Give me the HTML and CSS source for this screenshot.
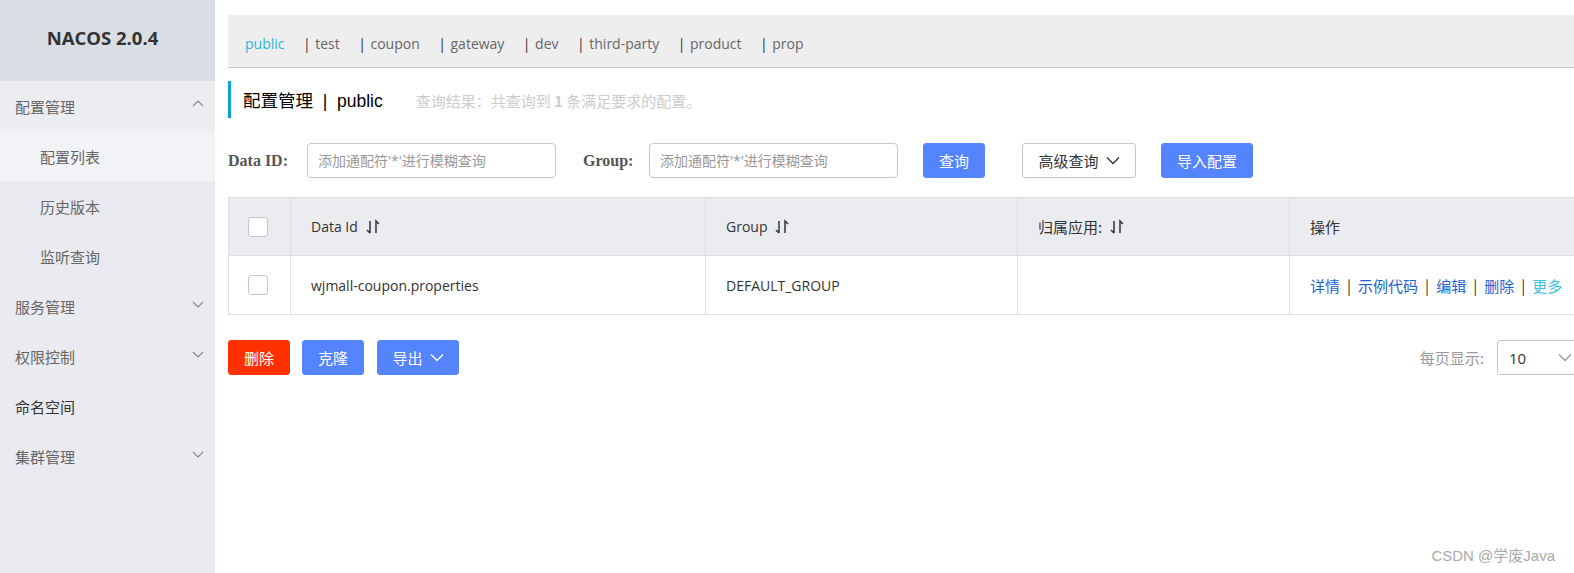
FILE: index.html
```html
<!DOCTYPE html>
<html lang="zh">
<head>
<meta charset="utf-8">
<link rel="stylesheet" href="styles.css">
</head>
<body>
<div class="app">
  <aside class="sidebar">
    <div class="logo">NACOS 2.0.4</div>
    <nav class="menu">
      <div class="menu-item group-open">配置管理
        <svg class="arrow" width="12" height="8" viewBox="0 0 12 8"><path d="M1 7 L6 2 L11 7" fill="none" stroke="#888" stroke-width="1.2"/></svg>
      </div>
      <div class="menu-sub active">配置列表</div>
      <div class="menu-sub">历史版本</div>
      <div class="menu-sub">监听查询</div>
      <div class="menu-item">服务管理
        <svg class="arrow" width="12" height="8" viewBox="0 0 12 8"><path d="M1 1 L6 6 L11 1" fill="none" stroke="#888" stroke-width="1.2"/></svg>
      </div>
      <div class="menu-item">权限控制
        <svg class="arrow" width="12" height="8" viewBox="0 0 12 8"><path d="M1 1 L6 6 L11 1" fill="none" stroke="#888" stroke-width="1.2"/></svg>
      </div>
      <div class="menu-item dark">命名空间</div>
      <div class="menu-item">集群管理
        <svg class="arrow" width="12" height="8" viewBox="0 0 12 8"><path d="M1 1 L6 6 L11 1" fill="none" stroke="#888" stroke-width="1.2"/></svg>
      </div>
    </nav>
  </aside>
  <main class="main">
    <div class="ns-bar">
      <span class="ns active">public</span>
      <span class="ns"><i>|</i> test</span>
      <span class="ns"><i>|</i> coupon</span>
      <span class="ns"><i>|</i> gateway</span>
      <span class="ns"><i>|</i> dev</span>
      <span class="ns"><i>|</i> third-party</span>
      <span class="ns"><i>|</i> product</span>
      <span class="ns"><i>|</i> prop</span>
    </div>
    <div class="title-row">
      <span class="title">配置管理 &nbsp;|&nbsp; public</span>
      <span class="result">查询结果：共查询到 <b>1</b> 条满足要求的配置。</span>
    </div>
    <div class="search-row">
      <label class="lbl">Data ID:</label>
      <input class="inp" type="text" placeholder="添加通配符'*'进行模糊查询">
      <label class="lbl lbl2">Group:</label>
      <input class="inp" type="text" placeholder="添加通配符'*'进行模糊查询">
      <button class="btn primary btn-query">查询</button>
      <button class="btn normal btn-adv">高级查询
        <svg width="14" height="9" viewBox="0 0 14 9"><path d="M1 1.5 L7 7.5 L13 1.5" fill="none" stroke="#333" stroke-width="1.4"/></svg>
      </button>
      <button class="btn primary btn-import">导入配置</button>
    </div>
    <div class="table">
      <div class="tr th">
        <div class="td c0"><span class="cb"></span></div>
        <div class="td c1">Data Id <svg class="sort" width="14" height="16" viewBox="0 0 14 16"><path d="M4 2 V14 M1 11 L4 14 M10 14 V2 L13 5" fill="none" stroke="#333" stroke-width="1.5"/></svg></div>
        <div class="td c2">Group <svg class="sort" width="14" height="16" viewBox="0 0 14 16"><path d="M4 2 V14 M1 11 L4 14 M10 14 V2 L13 5" fill="none" stroke="#333" stroke-width="1.5"/></svg></div>
        <div class="td c3 cjk">归属应用: <svg class="sort" width="14" height="16" viewBox="0 0 14 16"><path d="M4 2 V14 M1 11 L4 14 M10 14 V2 L13 5" fill="none" stroke="#333" stroke-width="1.5"/></svg></div>
        <div class="td c4 cjk">操作</div>
      </div>
      <div class="tr tb">
        <div class="td c0"><span class="cb"></span></div>
        <div class="td c1">wjmall-coupon.properties</div>
        <div class="td c2">DEFAULT_GROUP</div>
        <div class="td c3"></div>
        <div class="td c4 ops"><a>详情</a><i>|</i><a>示例代码</a><i>|</i><a>编辑</a><i>|</i><a>删除</a><i>|</i><a class="more">更多</a></div>
      </div>
    </div>
    <div class="bottom-row">
      <div class="left-btns">
        <button class="btn danger b-del">删除</button>
        <button class="btn primary b-clone">克隆</button>
        <button class="btn primary b-export">导出
          <svg width="14" height="9" viewBox="0 0 14 9"><path d="M1 1.5 L7 7.5 L13 1.5" fill="none" stroke="#fff" stroke-width="1.4"/></svg>
        </button>
      </div>
      <div class="pager">
        <span class="pager-lbl">每页显示:</span>
        <div class="select">10
          <svg width="14" height="9" viewBox="0 0 14 9"><path d="M1 1.5 L7 7.5 L13 1.5" fill="none" stroke="#999" stroke-width="1.3"/></svg>
        </div>
      </div>
    </div>
  </main>
</div>
<div class="watermark">CSDN @学废Java</div>
</body>
</html>
```
FILE: styles.css
```css
* { box-sizing: border-box; }
html, body { margin: 0; padding: 0; }
body {
  width: 1574px;
  height: 573px;
  overflow: hidden;
  font-family: "Open Sans", "Noto Sans CJK SC", sans-serif;
  font-size: 14px;
  color: #333;
  background: #fff;
  position: relative;
}
.app { display: flex; height: 573px; }
.sidebar {
  width: 215px;
  flex: 0 0 215px;
  background: #e9ebf0;
  height: 100%;
}
.logo {
  height: 81px;
  background: #d9dde4;
  display: flex;
  align-items: center;
  justify-content: center;
  font-family: "Open Sans", "Noto Sans CJK SC", sans-serif;
  font-weight: 700;
  font-size: 18.5px;
  color: #333;
  padding-bottom: 6px;
  padding-right: 10px;
}
.menu-item, .menu-sub {
  height: 50px;
  display: flex;
  align-items: center;
  padding-left: 15px;
  padding-right: 12px;
  color: #666;
  font-family: "Noto Sans CJK SC", sans-serif;
  font-size: 15px;
  position: relative;
}
.menu-item.group-open { background: #ecedf1; }
.menu-item.dark { color: #333; }
.menu-sub { padding-left: 40px; }
.menu-sub.active { background: #f2f3f7; }
.arrow { position: absolute; right: 11px; top: 20px; }
.menu-item.group-open .arrow { top: 18px; }

.main {
  flex: 1;
  min-width: 0;
  padding-left: 13px;
  padding-top: 15px;
  overflow: hidden;
}
.ns-bar {
  height: 53px;
  background: #eee;
  border-bottom: 1px solid #ccc;
  display: flex;
  align-items: center;
  padding-left: 17px;
  padding-top: 4px;
  width: 1400px;
}
.ns {
  color: #666;
  margin-right: 18.4px;
  font-size: 14px;
  white-space: nowrap;
}
.ns i { font-style: normal; color: #333; margin-right: 1px; }
.ns.active { color: #2cb5d8; }

.title-row {
  margin-top: 13px;
  height: 37px;
  border-left: 3px solid #0aa1d3;
  display: flex;
  align-items: center;
  padding-left: 12px;
}
.title { font-size: 17.5px; color: #000; font-family: "Liberation Sans", "Noto Sans CJK SC", sans-serif; }
.result { margin-left: 33px; color: #ccc; font-size: 15px; padding-top: 2px; font-family: "Noto Sans CJK SC", sans-serif; }
.result b { font-weight: 700; }

.search-row {
  margin-top: 25px;
  height: 35px;
  display: flex;
  align-items: center;
}
.lbl {
  font-family: "Liberation Serif", serif;
  font-weight: 700;
  font-size: 16px;
  color: #555;
  width: 79px;
}
.lbl2 { width: 66px; margin-left: 27px; }
.inp {
  width: 249px;
  height: 35px;
  border: 1px solid #c4c6cf;
  border-radius: 4px;
  padding: 0 10px;
  font-family: "Open Sans", "Noto Sans CJK SC", sans-serif;
  font-size: 14px;
  color: #333;
  outline: none;
}
.inp::placeholder { color: #999; }
.btn {
  height: 35px;
  border-radius: 3px;
  font-family: "Noto Sans CJK SC", sans-serif;
  font-size: 15px;
  border: 1px solid transparent;
  display: inline-flex;
  align-items: center;
  justify-content: center;
  gap: 7px;
  padding: 0;
  cursor: pointer;
}
.btn.primary { background: #5584ff; color: #fff; border-color: #5584ff; }
.btn.normal { background: #fff; color: #333; border-color: #c4c6cf; }
.btn.danger { background: #ff3000; color: #fff; border-color: #ff3000; }
.btn-query { width: 62px; margin-left: 25px; }
.btn-adv { width: 114px; margin-left: 37px; }
.btn-import { width: 92px; margin-left: 25px; }

.table {
  margin-top: 19px;
  width: 1400px;
  border: 1px solid #dcdee3;
  border-right: none;
}
.tr { display: flex; }
.th { height: 58px; background: #ebecf0; border-bottom: 1px solid #dcdee3; }
.tb { height: 58px; }
.td {
  display: flex;
  align-items: center;
  padding-left: 20px;
  border-right: 1px solid #dcdee3;
  color: #333;
  font-size: 14px;
  white-space: nowrap;
}
.cjk { font-size: 15px; font-family: "Noto Sans CJK SC", sans-serif; }
.c0 { width: 62px; padding-left: 19px; }
.c1 { width: 415px; }
.c2 { width: 312px; }
.c3 { width: 272px; }
.c4 { flex: 1; border-right: none; }
.cb {
  width: 20px; height: 20px;
  border: 1px solid #c4c6cf;
  border-radius: 3px;
  background: #fff;
  display: inline-block;
}
.sort { margin-left: 8px; }
.ops { font-size: 15px; font-family: "Noto Sans CJK SC", sans-serif; }
.ops a { color: #1d63d6; }
.ops a.more { color: #39c4e2; }
.ops i { font-style: normal; color: #333; margin: 0 7px; }

.bottom-row {
  margin-top: 25px;
  display: flex;
  justify-content: space-between;
  align-items: center;
  width: 1369px;
}
.left-btns { display: flex; }
.b-del { width: 62px; }
.b-clone { width: 62px; margin-left: 12px; }
.b-export { width: 82px; margin-left: 13px; }
.pager { display: flex; align-items: center; }
.pager-lbl { color: #999; font-size: 15px; margin-right: 13px; font-family: "Noto Sans CJK SC", sans-serif; }
.select {
  width: 100px;
  height: 35px;
  border: 1px solid #c4c6cf;
  border-radius: 3px;
  display: flex;
  align-items: center;
  padding-left: 11px;
  gap: 32px;
  color: #333;
  font-size: 15px;
}
.watermark {
  position: absolute;
  right: 19px;
  bottom: 8px;
  color: #aaa;
  font-family: "Liberation Sans", "Noto Sans CJK SC", sans-serif;
  font-size: 15px;
}
```
